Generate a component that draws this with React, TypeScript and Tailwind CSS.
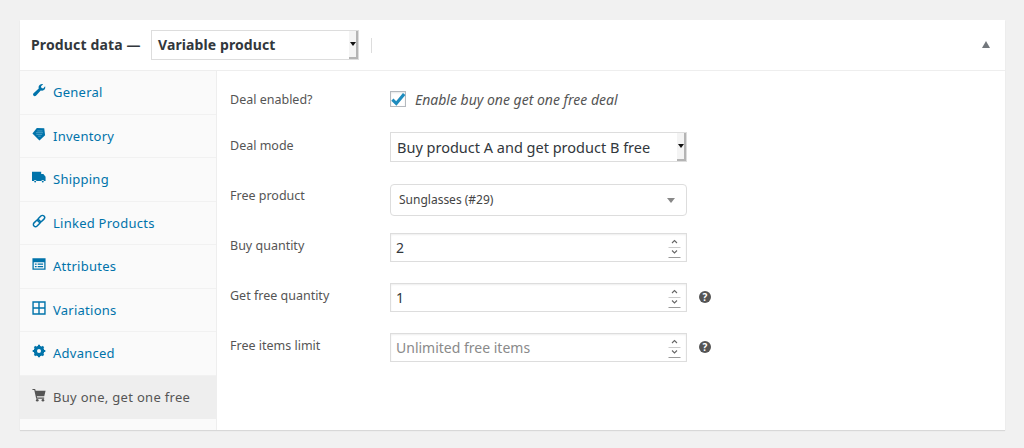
import React from "react";

const Wrench = () => (
  <svg viewBox="0 0 16 16" className="w-[14px] h-[14px]" fill="#0073aa">
    <path d="M15 3.600c.4 1.500 0 3.100-1.100 4.200-1.100 1-2.500 1.300-3.900.9L4.500 14.600c-.8.700-2 .7-2.700 0-.8-.8-.8-2 0-2.800L7.700 6.300C7.300 4.900 7.600 3.400 8.700 2.400 9.800 1.300 11.300.9 12.700 1.300L10.300 3.700l.5 2 2 .5z" />
  </svg>
);
const Tag = () => (
  <svg viewBox="0 0 16 16" className="w-[14px] h-[14px]" fill="#0073aa">
    <path d="M5.500 1 L14 1.500 L15 9.500 L8.500 15.500 L.5 7.500 Z" />
    <path d="M6 4.500 L12 4.500 M4.500 6.500 L12.500 6.500 M5 8.500 L11.500 8.500 M7 10.500 L10 10.500" stroke="#5aa8cc" strokeWidth="0.900" />
  </svg>
);
const Truck = () => (
  <svg viewBox="0 0 16 16" className="w-[15px] h-[15px]" fill="#0073aa">
    <path d="M0 1.500h10.500v2.500h2.500l2.500 3v5h-1.700a1.600 1.600 0 0 0-3.100 0H5.200a1.600 1.600 0 0 0-3.100 0H0z" />
    <circle cx="3.600" cy="12.700" r="1.100" />
    <circle cx="12.300" cy="12.700" r="1.100" />
  </svg>
);
const LinkIcon = () => (
  <svg viewBox="0 0 16 16" className="w-[14px] h-[14px]" fill="none" stroke="#0073aa" strokeWidth="1.700">
    <rect x="8" y="1" width="5" height="9" rx="2.500" transform="rotate(45 10.500 5.500)" />
    <rect x="3" y="6" width="5" height="9" rx="2.500" transform="rotate(45 5.500 10.500)" />
  </svg>
);
const Attr = () => (
  <svg viewBox="0 0 16 16" className="w-[14px] h-[14px]" fill="#0073aa">
    <path fillRule="evenodd" d="M.5 1.500h15v13H.5zM2 6v7h12V6zM3.300 7.300h2v1.500h-2zM6.500 7.300h6.200v1.500H6.500zM3.300 10.200h2v1.500h-2zM6.500 10.200h6.200v1.500H6.500z" />
  </svg>
);
const Grid = () => (
  <svg viewBox="0 0 16 16" className="w-[14px] h-[14px]" fill="none" stroke="#0073aa" strokeWidth="1.600">
    <path d="M1.200 1.200h13.600v13.600H1.200zM8 1.200v13.600M1.200 8h13.600" />
  </svg>
);
const Gear = () => (
  <svg viewBox="0 0 16 16" className="w-[14px] h-[14px]">
    <circle cx="8" cy="8" r="4.500" fill="none" stroke="#0073aa" strokeWidth="3.200" />
    <path d="M8 .8v14.400M.8 8h14.400M2.900 2.900l10.200 10.200M13.100 2.900 2.900 13.100" stroke="#0073aa" strokeWidth="2.400" />
    <circle cx="8" cy="8" r="2.300" fill="#fafafa" />
  </svg>
);
const Cart = () => (
  <svg viewBox="0 0 16 16" className="w-[14px] h-[14px]" fill="#555">
    <path d="M.5 1h3.100l.6 2H15.500l-1.500 6.500H5.500l.4 1.300h8v1.400H4.800L2.600 2.400H.5z" />
    <circle cx="6" cy="14" r="1.500" />
    <circle cx="12.500" cy="14" r="1.500" />
  </svg>
);

const tabs = [
  { label: "General", Icon: Wrench },
  { label: "Inventory", Icon: Tag },
  { label: "Shipping", Icon: Truck },
  { label: "Linked Products", Icon: LinkIcon },
  { label: "Attributes", Icon: Attr },
  { label: "Variations", Icon: Grid },
  { label: "Advanced", Icon: Gear },
];

const Help = () => (
  <div className="w-[12px] h-[12px] -mt-[1px] rounded-full bg-[#555] text-white text-[10px] leading-[12px] font-bold text-center">?</div>
);

const Spinner = () => (
  <svg viewBox="0 0 13 20" className="w-[13px] h-[20px] shrink-0" fill="none">
    <path d="M4 5 6.500 2.500 9 5" stroke="#666" strokeWidth="1.100" />
    <path d="M0.500 9.500h12" stroke="#ccc" strokeWidth="1" />
    <path d="M4 12.500 6.500 15 9 12.500" stroke="#666" strokeWidth="1.100" />
    <path d="M0.500 19.500h12" stroke="#999" strokeWidth="1" />
  </svg>
);

const Stepper = ({ value, placeholder }: { value?: string; placeholder?: string }) => (
  <div className="w-[297px] h-[29px] border border-[#ddd] shadow-[inset_0_1px_2px_rgba(0,0,0,0.07)] bg-white flex items-center pl-[5px] pr-[5px] justify-between">
    <span className={`text-[14px] ${placeholder ? "text-[#8a8a8a]" : "text-[#32373c]"}`}>{value ?? placeholder}</span>
    <Spinner />
  </div>
);

const NativeArrow = () => (
  <div className="w-[9px] h-[28px] bg-[#f4f4f4] border-r-2 border-b-2 border-[#b4b4b4] flex items-center justify-center shrink-0">
    <svg viewBox="0 0 6 4" className="w-[6px] h-[4px]"><path d="M0 0h6L3 4z" fill="#111" /></svg>
  </div>
);

const Row = ({ label, children, className, labelClass }: { label: string; children: React.ReactNode; className: string; labelClass: string }) => (
  <div className={`flex items-center ${className}`}>
    <div className={`w-[160px] shrink-0 text-[#555] text-[12.500px] ${labelClass}`}>{label}</div>
    {children}
  </div>
);

export default function App() {
  return (
    <div className="w-[1024px] h-[448px] bg-[#f1f1f1] pt-[20px] pl-[20px] overflow-hidden" style={{ fontFamily: '"Noto Sans", sans-serif' }}>
      <div className="w-[985px] h-[410px] bg-white shadow-[0_1px_1px_rgba(0,0,0,0.1)] flex flex-col">
        <div className="h-[51px] shrink-0 border-b border-[#eee] flex items-center pl-[11px] pr-[15px]">
          <span className="text-[14px] font-bold text-[#32373c] w-[120px] shrink-0 tracking-[0.15px] pb-[2px]">Product data —</span>
          <div className="w-[208px] h-[30px] border border-[#ddd] flex items-center justify-between pl-[6px]">
            <span className="text-[14px] font-bold text-[#32373c] tracking-[0.1px] pb-[2px]">Variable product</span>
            <NativeArrow />
          </div>
          <div className="w-px h-[15px] bg-[#ddd] ml-[12px]" />
          <svg viewBox="0 0 8 7" className="w-[8px] h-[7px] ml-auto -mt-[2px]"><path d="M4 0l4 7H0z" fill="#72777c" /></svg>
        </div>
        <div className="flex flex-1 min-h-0">
          <div className="w-[197px] shrink-0 bg-[#fafafa] border-r border-[#eee]">
            {tabs.map(({ label, Icon }) => (
              <div key={label} className="h-[43.500px] border-b border-[#f1f1f1] flex items-center gap-[7px] pl-[12px] pt-[1px] text-[13px] text-[#0073aa] tracking-[0.25px]">
                <span className="w-[14px] h-[15px] -mt-[5px] flex items-center justify-center"><Icon /></span>
                <span>{label}</span>
              </div>
            ))}
            <div className="h-[43.500px] bg-[#eee] flex items-center gap-[7px] pl-[12px] pt-[1px] text-[13px] text-[#555] tracking-[0.3px]">
              <span className="w-[14px] h-[15px] -mt-[5px] flex items-center justify-center"><Cart /></span>
              <span>Buy one, get one free</span>
            </div>
          </div>
          <div className="flex-1 pl-[13px] pt-[14px]">
            <Row label="Deal enabled?" className="h-[28px] mb-[19px]" labelClass="pt-[3px]">
              <div className="w-[16px] h-[16px] border border-[#b4b9be] bg-white flex items-center justify-center shrink-0 shadow-[inset_0_1px_2px_rgba(0,0,0,0.1)]">
                <svg viewBox="0 0 16 16" className="w-[18px] h-[18px] shrink-0"><path d="M3 8.500 6.500 12 13.500 3.500" fill="none" stroke="#1e8cbe" strokeWidth="2.800" /></svg>
              </div>
              <span className="italic text-[#555] text-[14px] ml-[9px] pt-[1px]">Enable buy one get one free deal</span>
            </Row>
            <Row label="Deal mode" className="h-[30px] mb-[22px]" labelClass="pb-[2px]">
              <div className="w-[297px] h-[30px] border border-[#ddd] flex items-center justify-between pl-[6px]">
                <span className="text-[14.500px] text-[#32373c] pt-[1px]">Buy product A and get product B free</span>
                <NativeArrow />
              </div>
            </Row>
            <Row label="Free product" className="h-[32px] mb-[17px]" labelClass="pb-[8px]">
              <div className="w-[297px] h-[32px] border border-[#ddd] rounded-[4px] flex items-center justify-between pl-[8px] pr-[11px]">
                <span className="text-[12px] text-[#444]">Sunglasses (#29)</span>
                <svg viewBox="0 0 8 5" className="w-[8px] h-[5px]"><path d="M0 0h8L4 5z" fill="#888" /></svg>
              </div>
            </Row>
            <Row label="Buy quantity" className="h-[29px] mb-[21px]" labelClass="pb-[3px]">
              <Stepper value="2" />
            </Row>
            <Row label="Get free quantity" className="h-[29px] mb-[21px]" labelClass="pb-[3px]">
              <Stepper value="1" />
              <div className="ml-[12px]"><Help /></div>
            </Row>
            <Row label="Free items limit" className="h-[29px]" labelClass="pb-[3px]">
              <Stepper placeholder="Unlimited free items" />
              <div className="ml-[12px]"><Help /></div>
            </Row>
          </div>
        </div>
      </div>
    </div>
  );
}
